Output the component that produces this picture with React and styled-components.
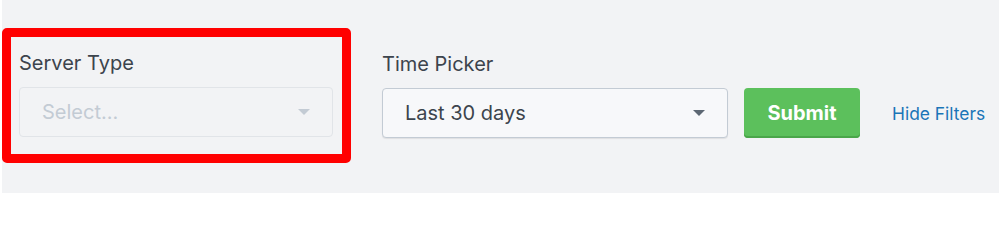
import React from "react";
import styled, { createGlobalStyle } from "styled-components";

const Global = createGlobalStyle`
  html, body { margin: 0; padding: 0; background: #ffffff; }
  body { font-family: Inter, "Open Sans", "Liberation Sans", sans-serif; }
`;

const Panel = styled.div`
  margin-left: 2px;
  height: 193px;
  background: #f2f3f5;
  box-sizing: border-box;
  padding-top: 28px;
`;

const Row = styled.div`
  display: flex;
  align-items: flex-start;
`;

const Highlight = styled.div`
  border: 9px solid #ff0000;
  border-radius: 5px;
  padding: 8px 7px 17px 8px;
  box-sizing: border-box;
  width: 349px;
`;

const Field = styled.div`
  display: flex;
  flex-direction: column;
  width: ${(p) => p.$width}px;
  margin-left: ${(p) => p.$offset || 0}px;
  margin-top: ${(p) => p.$top || 0}px;
`;

const Label = styled.label`
  font-size: 20px;
  line-height: 24px;
  color: #3c444d;
  height: 42px;
  padding-top: 6px;
  box-sizing: border-box;
`;

const Select = styled.div`
  height: 50px;
  box-sizing: border-box;
  display: flex;
  align-items: center;
  justify-content: space-between;
  padding: 0 22px 0 22px;
  border-radius: 4px;
  font-size: 20px;
  border: 1px solid ${(p) => (p.$disabled ? "#e1e4e8" : "#c3cbd4")};
  background: ${(p) => (p.$disabled ? "#f2f3f5" : "#f7f8fa")};
  color: ${(p) => (p.$disabled ? "#c3cbd4" : "#3c444d")};
  box-shadow: ${(p) => (p.$disabled ? "none" : "0 1px 1px rgba(0,0,0,0.08)")};
`;

const Caret = styled.span`
  width: 0;
  height: 0;
  border-left: 6px solid transparent;
  border-right: 6px solid transparent;
  border-top: 6px solid ${(p) => (p.$disabled ? "#c3cbd4" : "#5c6773")};
`;

const Actions = styled.div`
  display: flex;
  align-items: center;
  margin-top: 60px;
  margin-left: 16px;
`;

const Submit = styled.button`
  width: 116px;
  height: 50px;
  border: none;
  border-radius: 4px;
  background: #5cc05c;
  box-shadow: inset 0 -2px 0 #4aa64a;
  color: #ffffff;
  font-family: inherit;
  font-weight: 700;
  font-size: 20px;
  padding: 0;
  cursor: pointer;
`;

const Link = styled.a`
  margin-left: 32px;
  font-size: 17.4px;
  color: #1a75b8;
  text-decoration: none;
`;

export default function App() {
  return (
    <>
      <Global />
      <Panel>
        <Row>
          <Highlight>
            <Field $width={314}>
              <Label>Server Type</Label>
              <Select $disabled>
                <span>Select...</span>
                <Caret $disabled />
              </Select>
            </Field>
          </Highlight>
          <Field $width={346} $offset={31} $top={18}>
            <Label>Time Picker</Label>
            <Select>
              <span>Last 30 days</span>
              <Caret />
            </Select>
          </Field>
          <Actions>
            <Submit>Submit</Submit>
            <Link href="#">Hide Filters</Link>
          </Actions>
        </Row>
      </Panel>
    </>
  );
}
